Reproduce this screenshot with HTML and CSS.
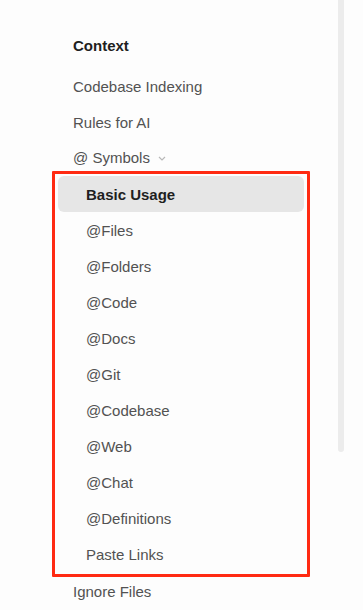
FILE: index.html
```html
<!DOCTYPE html>
<html lang="en">
<head>
    <meta charset="UTF-8">
    <meta name="viewport" content="width=device-width, initial-scale=1.0">
    <title>Context</title>
    <link rel="stylesheet" href="styles.css">
</head>
<body>
    <div class="page">
        <nav class="sidebar">
            <div class="section-title">Context</div>
            <a class="nav-item">Codebase Indexing</a>
            <a class="nav-item">Rules for AI</a>
            <a class="nav-item nav-group">@ Symbols
                <svg class="chevron" width="8" height="5" viewBox="0 0 8 5">
                    <path d="M1 1 L4 4 L7 1" fill="none" stroke="#b8b8b8" stroke-width="1.2"/>
                </svg>
            </a>
            <div class="sub-list">
                <a class="sub-item active">Basic Usage</a>
                <a class="sub-item">@Files</a>
                <a class="sub-item">@Folders</a>
                <a class="sub-item">@Code</a>
                <a class="sub-item">@Docs</a>
                <a class="sub-item">@Git</a>
                <a class="sub-item">@Codebase</a>
                <a class="sub-item">@Web</a>
                <a class="sub-item">@Chat</a>
                <a class="sub-item">@Definitions</a>
                <a class="sub-item">Paste Links</a>
            </div>
            <a class="nav-item last">Ignore Files</a>
        </nav>
        <div class="scrollbar"></div>
    </div>
</body>
</html>
```

FILE: styles.css
```css
body, html {
    margin: 0;
    padding: 0;
    font-family: "Liberation Sans", Arial, sans-serif;
    background-color: #fdfdfd;
}

.page {
    display: flex;
    align-items: flex-start;
    height: 610px;
    overflow: hidden;
}

.sidebar {
    width: 258px;
    margin-left: 52px;
    padding-top: 28px;
    display: flex;
    flex-direction: column;
}

.section-title {
    padding-left: 21px;
    height: 36px;
    line-height: 36px;
    margin-bottom: 4px;
    font-size: 15px;
    font-weight: bold;
    color: #1f1f1f;
}

.nav-item {
    display: flex;
    align-items: center;
    padding-left: 21px;
    height: 36px;
    font-size: 15px;
    color: #525252;
}

.nav-group {
    height: 31px;
    align-items: flex-start;
    padding-top: 9px;
    box-sizing: border-box;
}

.chevron {
    margin-left: 8px;
    margin-top: 7px;
}

.nav-item.last {
    height: 28px;
}

.sub-list {
    border: 3px solid #ff2a12;
    border-radius: 1px;
    padding: 2px 3px;
    display: flex;
    flex-direction: column;
}

.sub-item {
    display: flex;
    align-items: center;
    height: 36px;
    padding-left: 28px;
    border-radius: 6px;
    font-size: 15px;
    color: #525252;
}

.sub-item.active {
    background-color: #e6e6e6;
    color: #1f1f1f;
    font-weight: bold;
}

.scrollbar {
    width: 6px;
    height: 452px;
    margin-left: 28px;
    background-color: #ececec;
    border-radius: 0 0 3px 3px;
}
```
